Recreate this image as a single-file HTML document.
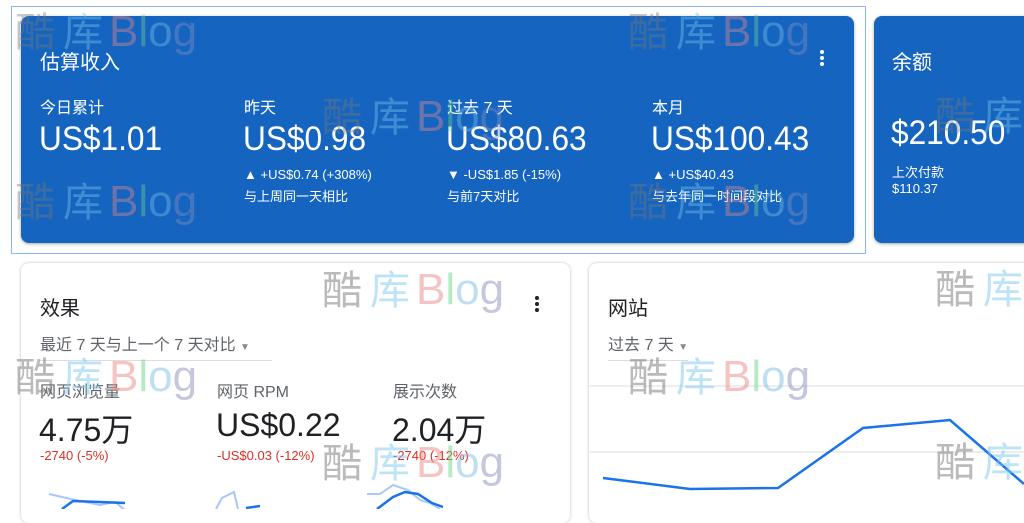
<!DOCTYPE html>
<html><head><meta charset="utf-8"><style>
*{margin:0;padding:0;box-sizing:border-box}
body{width:1024px;height:509px;overflow:hidden;background:#fff;position:relative;font-family:"Liberation Sans","Noto Sans CJK SC",sans-serif}
.a{position:absolute;white-space:nowrap}
.blue{background:#1565c0;border-radius:8px;box-shadow:0 1px 3px rgba(0,0,0,.35)}
.card{background:#fff;border-radius:8px;box-shadow:0 0 3px rgba(0,0,0,.25)}
.w{color:#fff}
.big{font-size:34px;transform:scaleX(.93);transform-origin:left top}
.wm{position:absolute;font-size:40px;line-height:40px;white-space:nowrap;opacity:.5;font-family:"Liberation Sans","Noto Sans CJK SC",sans-serif}
.wm .k{color:#777}.wm .c{color:#7ec8ef;margin-left:8px}.wm .b{color:#ec8a86;margin-left:6px;font-size:44px}.wm .l{color:#6fd68a;font-size:44px}.wm .o{color:#7fbfe8;font-size:44px}.wm .g{color:#8c90c0;font-size:44px}
.dots{position:absolute;width:4px}
.dots i{display:block;width:4px;height:4px;border-radius:2px;margin-bottom:2px}
</style></head><body>
<div class="a" style="left:11px;top:6px;width:855px;height:248px;border:1.5px solid #8ab4f8"></div>
<div class="a blue" style="left:21px;top:16px;width:833px;height:227px"></div>
<div class="a blue" style="left:874px;top:16px;width:170px;height:227px"></div>
<div class="a card" style="left:21px;top:263px;width:549px;height:260px"></div>
<div class="a card" style="left:589px;top:263px;width:450px;height:260px"></div>

<div class="a w" style="left:40px;top:46px;font-size:20px">估算收入</div>
<div class="dots" style="left:820px;top:50px"><i style="background:#fff"></i><i style="background:#fff"></i><i style="background:#fff"></i></div>
<div class="a w" style="left:40px;top:94px;font-size:16px">今日累计</div>
<div class="a w big" style="left:39px;top:120px">US$1.01</div>
<div class="a w" style="left:244px;top:94px;font-size:16px">昨天</div>
<div class="a w big" style="left:243px;top:120px">US$0.98</div>
<div class="a w" style="left:244px;top:167px;font-size:13px">▲ +US$0.74 (+308%)</div>
<div class="a w" style="left:244px;top:186px;font-size:13px">与上周同一天相比</div>
<div class="a w" style="left:447px;top:94px;font-size:16px">过去 7 天</div>
<div class="a w big" style="left:446px;top:120px">US$80.63</div>
<div class="a w" style="left:447px;top:167px;font-size:13px">▼ -US$1.85 (-15%)</div>
<div class="a w" style="left:447px;top:186px;font-size:13px">与前7天对比</div>
<div class="a w" style="left:652px;top:94px;font-size:16px">本月</div>
<div class="a w big" style="left:651px;top:120px">US$100.43</div>
<div class="a w" style="left:652px;top:167px;font-size:13px">▲ +US$40.43</div>
<div class="a w" style="left:652px;top:186px;font-size:13px">与去年同一时间段对比</div>
<div class="a w" style="left:892px;top:46px;font-size:20px">余额</div>
<div class="a w big" style="left:891px;top:114px">$210.50</div>
<div class="a w" style="left:892px;top:162px;font-size:13px">上次付款</div>
<div class="a w" style="left:892px;top:181px;font-size:13px">$110.37</div>

<div class="a" style="left:40px;top:292px;font-size:20px;color:#202124">效果</div>
<div class="dots" style="left:535px;top:296px"><i style="background:#202124"></i><i style="background:#202124"></i><i style="background:#202124"></i></div>
<div class="a" style="left:40px;top:331px;font-size:16px;color:#5f6368">最近 7 天与上一个 7 天对比 <span style="font-size:10px;color:#888">▼</span></div>
<div class="a" style="left:40px;top:360px;width:232px;height:1px;background:#ddd"></div>
<div class="a" style="left:40px;top:378px;font-size:16px;color:#5f6368">网页浏览量</div>
<div class="a" style="left:39px;top:405px;font-size:32px;color:#202124">4.75万</div>
<div class="a" style="left:40px;top:448px;font-size:13px;color:#d93025">-2740 (-5%)</div>
<div class="a" style="left:217px;top:378px;font-size:16px;color:#5f6368">网页 RPM</div>
<div class="a" style="left:216px;top:407px;font-size:32px;color:#202124">US$0.22</div>
<div class="a" style="left:217px;top:448px;font-size:13px;color:#d93025">-US$0.03 (-12%)</div>
<div class="a" style="left:393px;top:378px;font-size:16px;color:#5f6368">展示次数</div>
<div class="a" style="left:392px;top:405px;font-size:32px;color:#202124">2.04万</div>
<div class="a" style="left:393px;top:448px;font-size:13px;color:#d93025">-2740 (-12%)</div>

<div class="a" style="left:608px;top:292px;font-size:20px;color:#202124">网站</div>
<div class="a" style="left:608px;top:331px;font-size:16px;color:#5f6368">过去 7 天 <span style="font-size:10px;color:#888">▼</span></div>
<div class="a" style="left:608px;top:360px;width:80px;height:1px;background:#ddd"></div>

<svg class="a" style="left:0;top:0" width="1024" height="509">
<line x1="589" y1="386" x2="1024" y2="386" stroke="#ddd"/>
<line x1="589" y1="452" x2="1024" y2="452" stroke="#ddd"/>
<polyline points="603,478 690,489 778,488 863,428 950,420 1024,484" fill="none" stroke="#1a73e8" stroke-width="2.5"/>
<polyline points="49,494 75,500 100,505 115,502 125,510" fill="none" stroke="#a8c7fa" stroke-width="2"/>
<polyline points="62,509 73,501 100,502 125,503" fill="none" stroke="#1a73e8" stroke-width="2.5"/>
<polyline points="216,509 222,498 234,492 238,509" fill="none" stroke="#a8c7fa" stroke-width="2"/>
<polyline points="246,508 260,506" fill="none" stroke="#1a73e8" stroke-width="2.5"/>
<polyline points="367,494 380,494 393,485 408,490 420,500 430,503 440,509" fill="none" stroke="#a8c7fa" stroke-width="2"/>
<polyline points="377,509 393,497 405,492 418,494 432,503 443,507" fill="none" stroke="#1a73e8" stroke-width="2.5"/>
</svg>

<div class="wm" style="left:15px;top:12px;opacity:.4"><span class="k">酷</span><span class="c">库</span><span class="b">B</span><span class="l">l</span><span class="o">o</span><span class="g">g</span></div>
<div class="wm" style="left:15px;top:182px;opacity:.4"><span class="k">酷</span><span class="c">库</span><span class="b">B</span><span class="l">l</span><span class="o">o</span><span class="g">g</span></div>
<div class="wm" style="left:322px;top:97px;opacity:.4"><span class="k">酷</span><span class="c">库</span><span class="b">B</span><span class="l">l</span><span class="o">o</span><span class="g">g</span></div>
<div class="wm" style="left:628px;top:12px;opacity:.4"><span class="k">酷</span><span class="c">库</span><span class="b">B</span><span class="l">l</span><span class="o">o</span><span class="g">g</span></div>
<div class="wm" style="left:628px;top:182px;opacity:.4"><span class="k">酷</span><span class="c">库</span><span class="b">B</span><span class="l">l</span><span class="o">o</span><span class="g">g</span></div>
<div class="wm" style="left:935px;top:97px;opacity:.4"><span class="k">酷</span><span class="c">库</span></div>
<div class="wm" style="left:322px;top:270px"><span class="k">酷</span><span class="c">库</span><span class="b">B</span><span class="l">l</span><span class="o">o</span><span class="g">g</span></div>
<div class="wm" style="left:935px;top:270px"><span class="k">酷</span><span class="c">库</span></div>
<div class="wm" style="left:15px;top:357px"><span class="k">酷</span><span class="c">库</span><span class="b">B</span><span class="l">l</span><span class="o">o</span><span class="g">g</span></div>
<div class="wm" style="left:628px;top:357px"><span class="k">酷</span><span class="c">库</span><span class="b">B</span><span class="l">l</span><span class="o">o</span><span class="g">g</span></div>
<div class="wm" style="left:322px;top:443px"><span class="k">酷</span><span class="c">库</span><span class="b">B</span><span class="l">l</span><span class="o">o</span><span class="g">g</span></div>
<div class="wm" style="left:935px;top:443px"><span class="k">酷</span><span class="c">库</span></div>
</body></html>
